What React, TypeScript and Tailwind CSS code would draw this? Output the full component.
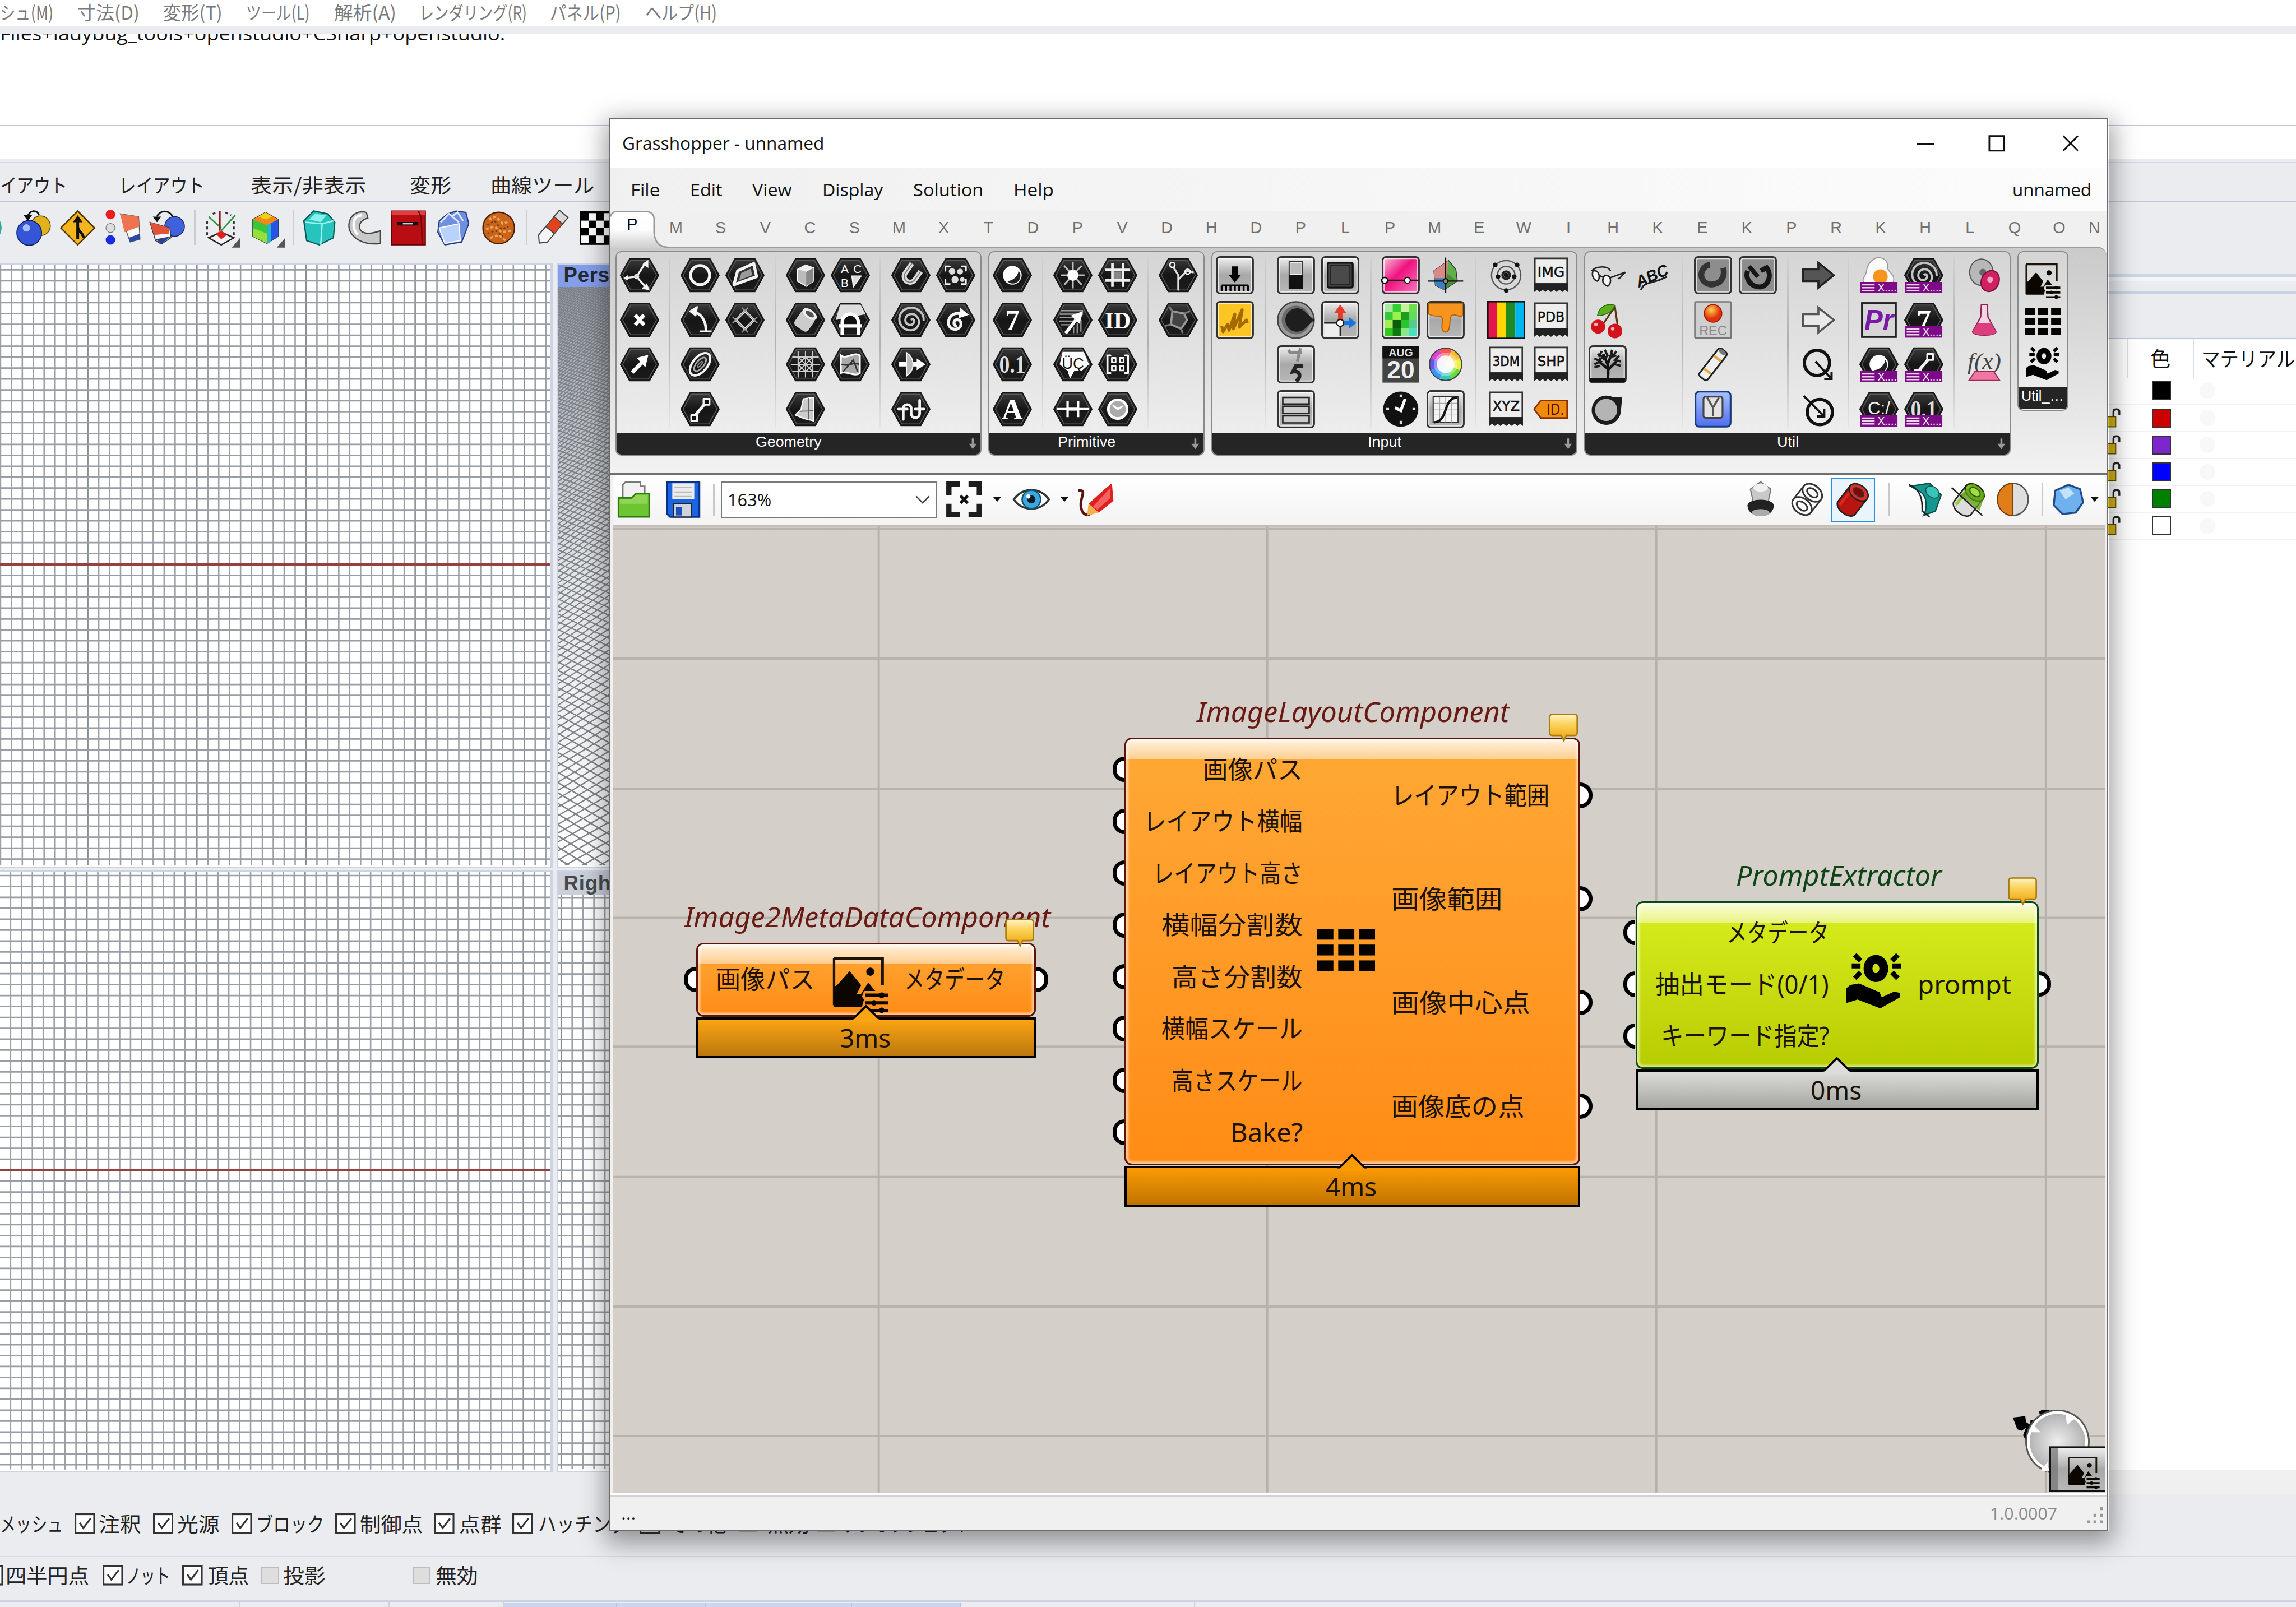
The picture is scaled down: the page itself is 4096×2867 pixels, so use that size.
import React, { useLayoutEffect, useRef } from "react";

type Kids = { children?: React.ReactNode };

/* Text squeezed or stretched to the width its class gives it. */
function Fit({ className, children }: Kids & { className: string }) {
  const outer = useRef<HTMLSpanElement>(null);
  const inner = useRef<HTMLSpanElement>(null);
  useLayoutEffect(() => {
    const o = outer.current!.getBoundingClientRect().width;
    const i = inner.current!.getBoundingClientRect().width;
    if (i > 0) inner.current!.style.transform = `scaleX(${o / i})`;
  }, []);
  return (
    <span ref={outer} className={"block shrink-0 " + className}>
      <span ref={inner} className="inline-block origin-left whitespace-nowrap">
        {children}
      </span>
    </span>
  );
}

function Ico({ children, className = "size-[26px]" }: Kids & { className?: string }) {
  return (
    <svg viewBox="-13 -13 26 26" className={"shrink-0 overflow-visible " + className} fill="none">
      {children}
    </svg>
  );
}

function Hex({ children }: Kids) {
  return (
    <Ico>
      <path d="M-13 0L-6.8 -11.2H6.8L13 0L6.8 11.2H-6.8Z" fill="url(#hex)" stroke="#161616" strokeWidth="0.8" strokeLinejoin="round" />
      <path d="M-11.6 0L-6 -10.1H6L11.6 0L6 10.1H-6Z" stroke="#5a5a5a" strokeWidth="0.6" />
      {children}
    </Ico>
  );
}

const wh = { stroke: "#f4f4f4", strokeWidth: 1.5, strokeLinejoin: "round" as const, strokeLinecap: "round" as const };
const serif = "Liberation Serif, serif";
const sans = "Liberation Sans, sans-serif";
const SPIRAL = "M0 0c1 -1.4 2.6 .4 1.4 1.8c-1.6 2 -4.6 .4 -4.4 -2c.2 -3.2 4.4 -4.2 6.4 -1.6c2.4 3.2 .2 7.4 -3.4 7.4c-4.6 0 -7.2 -4 -6 -8c1.2 -4 6.4 -5.6 10 -3.2c2 1.4 3.2 3.6 3 6";

const I: Record<string, React.ReactNode> = {
  point: <Hex><g {...wh} strokeWidth="1.3"><path d="M-2 1L4 -8.5M-2 1L-10 2M-2 1L4.5 8.500" /></g><path d="M6 -10.500L6 -5L2 -7.500ZM7 10.500L1.500 9L5 5.500ZM-11 2L-8 0V3.600Z" fill="#f4f4f4" /><circle cx="-2" cy="1" r="1.800" fill="#ddd" /></Hex>,
  cross: <Hex><path d="M-3 -3.4L3 3.4M3 -3.4L-3 3.4" stroke="#fff" strokeWidth="2.6" /></Hex>,
  vector: <Hex><path d="M-5 5.5L2 -1.6" stroke="#fff" strokeWidth="2.6" /><path d="M6 -6.5L4 2L-2 -4.4Z" fill="#fff" /></Hex>,
  circle: <Hex><circle r="6.500" {...wh} strokeWidth="2" /></Hex>,
  arc: <Hex><path d="M-5 -5.500C1 -5 4 1 4 7" {...wh} strokeWidth="1.800" /><path d="M-7 -6L-2 -9L-3 -3ZM0 7.600H7.500" {...wh} fill="#fff" strokeWidth="1" /></Hex>,
  curve: <Hex><g transform="rotate(-50)"><ellipse rx="9" ry="5" {...wh} strokeWidth="1.6" /><ellipse rx="5.6" ry="2.6" {...wh} stroke="#aaa" strokeWidth="1.1" /><ellipse rx="2.4" ry=".8" {...wh} stroke="#888" strokeWidth=".8" /></g></Hex>,
  line: <Hex><path d="M-4 5L4 -4.5" {...wh} strokeWidth="2" /><path d="M-6 4h4v4h-4ZM2.4 -7h4v4h-4Z" fill="#111" {...wh} strokeWidth="1.3" /></Hex>,
  plane: <Hex><path d="M-7.500 6.500L-5 -3L6 -8L8 1Z" {...wh} strokeWidth="2" fill="#333" /><path d="M-4 3.500L-2.500 -1.500L4 -4.500L5 0Z" fill="#999" /></Hex>,
  rect: <Hex><g transform="rotate(45)"><rect x="-4.4" y="-4.4" width="8.8" height="8.8" {...wh} strokeWidth="1.6" /><path d="M-7.5 -4.4H7.5M-7.5 4.4H7.5M-4.4 -7.5V7.5M4.4 -7.5V7.5" stroke="#999" strokeWidth=".9" /></g></Hex>,
  box: <Hex><path d="M-5.5 -4L0 -7L5.5 -5V4L.5 7.5L-5.5 4Z" fill="#bbb" stroke="#fff" strokeWidth=".7" /><path d="M.5 -2.4L5.5 -5V4L.5 7.5Z" fill="#888" /><path d="M-5.5 -4L.5 -2.4L5.5 -5L0 -7Z" fill="#eee" /></Hex>,
  brep: <Hex><g transform="rotate(35)"><rect x="-5.6" y="-5" width="11.2" height="12" rx="2.4" fill="#ccc" /><ellipse cy="-5" rx="5.6" ry="3" fill="#eee" /><ellipse cy="-5" rx="3.4" ry="1.6" fill="#555" /></g></Hex>,
  mesh: <Hex><g stroke="#ccc" strokeWidth=".8"><path d="M-5 -9V9M0 -9V9M5 -9V9M-9 -5H9M-10 0H10M-9 5H9M-5 -5L5 5M5 -5L-5 5M0 -5L-5 0L0 5L5 0Z" /></g></Hex>,
  twist: <Hex><path d="M-7 4L-3 0L-1.500 -7L5.500 -8V8L-1 6.400Z" fill="#ccc" stroke="#fff" strokeWidth=".8" /><path d="M2 -7.6V7M-4 1.500L5.5 1" stroke="#666" strokeWidth=".7" /></Hex>,
  abc: <Hex><g fill="#fff" fontFamily={sans} fontSize="8"><text x="-6.5" y="-1.500">A</text><text x="2" y="-1.500">C</text><text x="-6.5" y="8">B</text></g><path d="M1 0.500H7.500L2 8Z" fill="#ddd" stroke="#fff" strokeWidth=".6" /></Hex>,
  field: <Hex><path d="M-7 -10.500H7L10.500 -4L-10 0Z" fill="#ddd" /><path d="M-5.500 10V2C-6 -6 5.500 -6 5.500 2V10M-8 4H8" stroke="#fff" strokeWidth="2.400" /><path d="M-4.200 2C-4.500 -4.500 4.500 -4.500 4.200 2Z" fill="#111" /></Hex>,
  srf: <Hex><path d="M-6.5 -6C-3 -3 3 -9 6.5 -6V6C3 9 -3 4 -6.5 6Z" fill="#aaa" stroke="#fff" strokeWidth="1.200" /><path d="M-5 5L2 -3L5 5M-6 0C-2 2 2 -2 6 0" stroke="#333" strokeWidth="1" /></Hex>,
  magnet: <Hex><g transform="rotate(35)"><path d="M-4 -7V1A4 4 0 0 0 4 1V-6" stroke="#ddd" strokeWidth="3.400" /><path d="M-4 -7V1A4 4 0 0 0 4 1V-6" stroke="#777" strokeWidth=".7" /></g></Hex>,
  dots: <Hex><g fill="#ddd"><circle cx="-2.500" cy="-2.600" r="2.200" /><circle cx="3" cy="-2.500" r="2" /><circle cx="-.5" cy="3" r="2.400" /><circle cx="4.500" cy="3" r="1.600" /></g><path d="M-7 -3V-6h3M7 -3V-6H4M-7 3V6h3M7 3V6H4" {...wh} strokeWidth="1.1" /></Hex>,
  spiral: <Hex><path d={SPIRAL} stroke="#c4c4c4" strokeWidth="1.2" transform="scale(1.25)" /></Hex>,
  swirl: <Hex><path d="M0 4c-2 -1 -1.4 -4.4 1.2 -4.2c3 .2 3.4 5 0 6.2c-4 1.2 -7 -2 -6 -5.6c1 -4 4.6 -6 9.4 -4.4" {...wh} strokeWidth="2" /><path d="M3 -8.500L9 -3.500L2 -1.200Z" fill="#fff" /></Hex>,
  through: <Hex><path d="M-8 0H5" stroke="#fff" strokeWidth="3" /><path d="M4 -4L10 0L4 4Z" fill="#fff" /><path d="M-3 -8C3 -4 3 4 -3 8Z" fill="#bbb" stroke="#fff" strokeWidth=".7" /></Hex>,
  wave: <Hex><path d="M-5.200 7V-1A2.800 2.800 0 0 1 .2 -1V3A2.800 2.800 0 0 0 6 3V-6M-8.500 0H-2.500M3 0H9" {...wh} strokeWidth="1.800" /></Hex>,
  bool: <Hex><circle r="6.400" fill="#fff" /><path d="M4.200 -3A5 5 0 0 1 -3.500 4C0 4 4 1 4.200 -3Z" fill="#222" /></Hex>,
  seven: <Hex><text y="6.800" textAnchor="middle" fontFamily={serif} fontWeight="bold" fontSize="20" fill="#fff">7</text></Hex>,
  num: <Hex><text y="5.800" textAnchor="middle" fontFamily={serif} fontWeight="bold" fontSize="17" textLength="18" lengthAdjust="spacingAndGlyphs" fill="#ddd">0.1</text></Hex>,
  text: <Hex><text y="6.8" textAnchor="middle" fontFamily={serif} fontWeight="bold" fontSize="20" fill="#fff">A</text></Hex>,
  star: <Hex><path d="M0 -9V9M-8 0H8M-6 -6.5L6 6.5M6 -6.5L-6 6.5" stroke="#bbb" strokeWidth="1.2" /><circle r="3.800" fill="#fff" /></Hex>,
  hatch: <Hex><g stroke="#999" strokeWidth=".9"><path d="M-9 -4H7M-9 -1.6H5M-9.5 .8H2M-8 3.2H0M-8 -6.4H7M3 9V2M5.5 8V0M.5 9V5" /></g><path d="M-5 9L2 0" stroke="#fff" strokeWidth="2.200" /><path d="M7 -6L4.6 2.6L-1.4 -3Z" fill="#fff" /></Hex>,
  culture: <Hex><path d="M-7 -8.500H7.500L11 0L6 4.500L1 4.500L-2 10L-3.500 4.500L-9 0Z" fill="#fff" /><text y="3" textAnchor="middle" fontFamily={sans} fontSize="10.500" fill="#111">ÜÇ</text></Hex>,
  domain: <Hex><path d="M-11 0H11M-3.6 -5.5V5.5M3.6 -5.5V5.5" stroke="#fff" strokeWidth="1.6" /><path d="M-3.6 -1h7.2v2h-7.2Z" fill="#fff" /></Hex>,
  hash: <Hex><path d="M-3.6 -8V8M3.6 -8V8M-8.5 -3.6H8.5M-8.5 3.6H8.5" stroke="#eee" strokeWidth="1.8" /><path d="M-2.6 -2.6h5.2v5.2h-5.2Z" fill="#888" /></Hex>,
  id: <Hex><text y="5.6" textAnchor="middle" fontFamily={serif} fontWeight="bold" fontSize="16" fill="#fff">ID</text></Hex>,
  matrix: <Hex><path d="M-5 -6H-7V6H-5M5 -6H7V6H5" {...wh} strokeWidth="1.4" /><path d="M-4 -4.4h2.6v3h-2.6ZM1.4 -4.4H4v3H1.4ZM-4 1.2h2.6v3h-2.6ZM1.4 1.2H4v3H1.4Z" {...wh} strokeWidth="1.1" /></Hex>,
  time: <Hex><circle r="6.400" fill="#aaa" stroke="#fff" strokeWidth="1.8" /><path d="M-3.4 -2.6L0 0L3.4 -2" stroke="#fff" strokeWidth="1.3" /></Hex>,
  path: <Hex><path d="M0 10V0L-3 -5M0 3L6 -3M6 -3L10 -2" {...wh} stroke="#ddd" strokeWidth="1.3" /><circle cx="-4" cy="-7" r="1.7" {...wh} strokeWidth="1" /><circle cx="6.4" cy="-2.400" r="1.7" {...wh} strokeWidth="1" /></Hex>,
  poly: <Hex><path d="M-4 -6L4 -4.4L6 0L2 6L-5 3Z" fill="#444" stroke="#999" strokeWidth="1.4" /><path d="M-4 -6L-6 -9M4 -4.4L8 -6M2 6L3 9M-5 3L-9 4" stroke="#777" strokeWidth="1.3" /></Hex>,
};

function Tile({ children, fill = "url(#tile)" }: Kids & { fill?: string }) {
  return (
    <Ico>
      <rect x="-12.4" y="-12.4" width="24.8" height="24.8" rx="2.2" fill={fill} stroke="#333" strokeWidth="1.2" />
      <rect x="-11.4" y="-11.4" width="22.8" height="22.8" rx="1.4" stroke="#fff" strokeOpacity=".7" strokeWidth=".8" />
      {children}
    </Ico>
  );
}

function FileTag({ label }: { label: string }) {
  return (
    <Ico>
      <path d="M-11 -11.5H11V6H-11Z" fill="#eee" stroke="#333" strokeWidth="1" />
      <path d="M-11.5 5.5H11.5V11.5L9.6 10L7.7 11.5L5.8 10L3.9 11.5L2 10L0 11.5L-2 10L-3.9 11.5L-5.8 10L-7.7 11.5L-9.6 10L-11.5 11.5Z" fill="#222" />
      <text y="1" textAnchor="middle" fontFamily="DejaVu Sans, sans-serif" fontSize="9.8" textLength="18.500" lengthAdjust="spacingAndGlyphs" fill="#111" stroke="#111" strokeWidth=".25">{label}</text>
    </Ico>
  );
}

/* Purple banner that marks the wrapped components. */
function X({ children }: Kids) {
  return (
    <span className="relative flex size-[26px]">
      {children}
      <svg viewBox="0 0 26 8" className="absolute bottom-[0.8px] left-0 h-[7.8px] w-[26px]">
        <rect width="26" height="8" fill="#7d0a86" />
        <path d="M1 2H10M1 4H10M1 6H10" stroke="#e9d5ea" strokeWidth="1" />
        <text x="12" y="6.8" fontFamily={sans} fontSize="7.6" fill="#fff">X....</text>
      </svg>
    </span>
  );
}

function PictureGlyph({ className }: { className: string }) {
  return (
    <svg viewBox="0 0 39 36" className={className} fill="#0b0700">
      <path d="M1 1H35V20" fill="none" stroke="#1d1408" strokeWidth="2" />
      <path d="M1 1V34" stroke="#1d1408" strokeWidth="1.7" />
      <circle cx="26.5" cy="10.5" r="2.9" />
      <path d="M1 21L3 20L12 10L20 20L17 26L20 26L25 18L30 24H22L20.6 28L22 30L20.6 35H1Z" />
      <path d="M23 26.6H39V29H23ZM23 32H39V34.4H23ZM23 37.4H39V39.6H23Z" transform="translate(0 -.8)" />
      <circle cx="34.5" cy="27" r="2" /><circle cx="29" cy="32.4" r="2" /><circle cx="34.5" cy="37.6" r="2" />
    </svg>
  );
}

function GridGlyph({ className }: { className: string }) {
  return (
    <svg viewBox="0 0 39.6 29" preserveAspectRatio="none" className={className}>
      {[0, 10.8, 21.6].map((y) => [0, 14.3, 28.6].map((x) => <rect key={x + "-" + y} x={x} y={y} width="11" height="7.4" fill="#050300" />))}
    </svg>
  );
}

function HandGlyph({ className }: { className: string }) {
  return (
    <svg viewBox="0 0 38 38" preserveAspectRatio="none" className={className}>
      <ellipse cx="20.5" cy="10.3" rx="5.4" ry="6.2" fill="none" stroke="#000" strokeWidth="6" />
      <g stroke="#000" strokeWidth="3.4"><path d="M6 1L10 5M35.500 1L31.500 5M4 8.500H10M31.500 8.500H38M6 17L10 13M35.500 17L31.500 13" /></g>
      <path d="M0 24L3 21.500L9 20.500L23 26.500L24.500 30L33 26L37 27V30L23.500 37.500L8 31.500L0 34Z" fill="#000" />
    </svg>
  );
}

const clock = (
  <Ico><circle r="12" fill="#111" /><path d="M-4 -1L0 1L3 -7" stroke="#fff" strokeWidth="2" /><path d="M0 -10v2M0 8v2M-10 0h2M8 0h2" stroke="#ddd" strokeWidth="1.6" /></Ico>
);
const palette = ["#a9e8a0", "#2fd02f", "#c8ef9c", "#6be04f", "#35c935", "#9cef4c", "#1b9e1b", "#62d862", "#9ff050", "#0c5d0c", "#2cc42c", "#57c98a", "#35c522", "#0f7a0f", "#8ce68c", "#4be0c0"];

const P: Record<string, React.ReactNode> = {
  down: <Tile><path d="M0 -6V1" stroke="#000" strokeWidth="4" /><path d="M-4 0H4L0 5Z" fill="#000" /><path d="M-9 7H9M-9 7v4M-6 7v4M-3 7v4M0 7v4M3 7v4M6 7v4M9 7v4" stroke="#000" strokeWidth="1.3" /></Tile>,
  scribble: <Tile fill="#fcc524"><path d="M-9 4L-8 8L-5 3L-4 7L0 -4L-1 6L5 -7L3 5L8 0L8.500 2" stroke="#a36a00" strokeWidth="2" strokeLinejoin="round" /></Tile>,
  toggle: <Tile><rect x="-5" y="-9.5" width="10" height="19" fill="#111" /><rect x="-4" y="-8.600" width="8" height="8" fill="#bbb" stroke="#eee" strokeWidth=".6" /></Tile>,
  button: <Tile><rect x="-8.500" y="-8.500" width="17" height="17" rx="1" fill="#4a4a4a" stroke="#111" strokeWidth="1.3" /><rect x="-6.600" y="-6.600" width="13.200" height="13.200" stroke="#222" strokeWidth=".8" /></Tile>,
  knob: <Ico><circle r="12.400" fill="#9a9a9a" stroke="#444" strokeWidth="1" /><circle r="9.800" fill="#6c6c6c" /><path d="M12.400 0L7 -5A8 8 0 1 0 7 5Z" fill="#1e1e1e" /></Ico>,
  mdslider: <Tile><path d="M-11 2H0V11H-11Z" fill="#eee" /><path d="M-11 2H0V11" stroke="#222" strokeWidth="1" /><path d="M0 0V-6" stroke="#e43b2c" strokeWidth="3" /><path d="M-4 -5H4L0 -10.500Z" fill="#e43b2c" /><path d="M0 2H7" stroke="#1674e0" strokeWidth="3" /><path d="M6 -2V6L11 2Z" fill="#1674e0" /><circle cy="2" r="2.400" fill="#fff" stroke="#111" strokeWidth=".8" /></Tile>,
  scroll: <Tile><path d="M-5 -10L-4 -8H4M3 -11L1 -2" stroke="#888" strokeWidth="2" /><path d="M5 1H0L-2 5C3 4 4 9 0 11.500" stroke="#222" strokeWidth="2.600" /></Tile>,
  list: <Tile><path d="M-9 -8H9V-3.500H-9ZM-9 -2H9V3H-9ZM-9 4.600H9V9.400H-9Z" fill="#ccc" stroke="#222" strokeWidth="1" /></Tile>,
  gradient: <Tile fill="url(#pink)"><path d="M-12 3.500H12" stroke="#111" strokeWidth="1" /><circle cx="-11" cy="3.500" r="2" fill="#fff" stroke="#111" /><circle cx="4.500" cy="3.500" r="2" fill="#fff" stroke="#111" strokeWidth=".8" /></Tile>,
  samples: <Tile>{palette.map((c, i) => <rect key={i} x={-11 + (i % 4) * 5.5} y={-11 + Math.floor(i / 4) * 5.5} width="5.600" height="5.600" fill={c} />)}</Tile>,
  aug: <Ico><rect x="-12.500" y="-12.500" width="25" height="25" fill="#444" /><rect x="-12.500" y="-12.500" width="25" height="8.500" fill="#111" /><text y="-5.500" textAnchor="middle" fontFamily={sans} fontSize="7.500" fontWeight="bold" fill="#ddd">AUG</text><text y="9.500" textAnchor="middle" fontFamily={sans} fontSize="17" fontWeight="bold" fill="#eee">20</text></Ico>,
  clock,
  cube: <Ico><path d="M-8 -3L2 -10L7 -4L8 4L-1 10L-7 7Z" fill="#5fae4a" stroke="#333" strokeWidth=".6" /><path d="M-8 -3L2 -10L1 -1L-1 10L-7 7Z" fill="#d98a84" /><path d="M-7 7L-1 10L0 2L-7.500 2Z" fill="#3b7fc0" /><path d="M1 -1L8 4L-1 10Z" fill="#4a8a3a" /><path d="M-12 4H12M0 -12V12" stroke="#111" strokeWidth=".9" /><circle cy="4" r="1.600" fill="#888" stroke="#111" strokeWidth=".7" /></Ico>,
  drip: <Tile><path d="M-11.500 -11.500H11.500V-3C9 -1 7 -5 4 -3C2 -1 4 6 1 8C-3 9 -3 5 -2 0C-3 -5 -6 -1 -11.500 -4Z" fill="#f7941d" stroke="#b85f00" strokeWidth=".7" /></Tile>,
  wheel: <Ico>{["#f55", "#fb3", "#ee4", "#6d3", "#3cb", "#39f", "#65e", "#d4c"].map((c, i) => <path key={i} d="M0 0L-4.300 -10.400A11.300 11.300 0 0 1 4.300 -10.400Z" transform={`rotate(${i * 45})`} fill={c} />)}<circle r="11" stroke="#444" strokeWidth=".8" /><circle r="8" fill="#fff" opacity=".35" /><circle r="6" fill="#fff" opacity=".9" /></Ico>,
  graph: <Tile><path d="M-8.500 -8.500H8.500V9H-8.500Z" fill="#f4f4f4" stroke="#333" strokeWidth=".8" /><path d="M-4 -8V9M0 -8V9M4 -8V9M-8 -4H8M-8 0H8M-8 4H8" stroke="#aaa" strokeWidth=".5" /><path d="M-8 9C2 9 -2 -8 8 -8" stroke="#111" strokeWidth="1.600" /></Tile>,
  atom: <Ico><circle r="10" stroke="#555" strokeWidth=".9" /><circle r="6" stroke="#555" strokeWidth=".9" /><circle r="2.500" stroke="#222" strokeWidth="1.600" />{[[-7.5, -7], [7.5, -7], [-5.5, 1], [5.5, 1], [0, 10.5], [0, 0]].map(([x, y]) => <circle key={x + "," + y} cx={x} cy={y} r="1.600" fill="#111" />)}</Ico>,
  bars: <Ico><rect x="-12.500" y="-12.500" width="6.250" height="25" fill="#e4154b" /><rect x="-6.250" y="-12.500" width="6.250" height="25" fill="#ffd500" /><rect y="-12.500" width="6.250" height="25" fill="#1f8a26" /><rect x="6.250" y="-12.500" width="6.250" height="25" fill="#00b6f1" /><rect x="-12.500" y="-12.500" width="25" height="25" stroke="#111" strokeWidth="1" /></Ico>,
  idtag: <Ico><path d="M-11.500 0L-7 -6H11V6H-7Z" fill="#f08a0c" stroke="#8a2f00" strokeWidth="1" /><text x="3" y="4" textAnchor="middle" fontFamily="DejaVu Sans, sans-serif" fontSize="10" textLength="12" lengthAdjust="spacingAndGlyphs" fill="#4a1500">ID.</text></Ico>,
  glasses: <Ico><g stroke="#222" strokeWidth="1"><path d="M-11 -3C-8 -6 0 -7 2 -3M1 2L12 -2C9 1 8 3 7 2" /><path d="M-10 -3C-5 -4 -5 3 -7 4C-10 3 -11 0 -10 -3ZM-2 0C4 0 2 7 0 7.500C-4 6 -4 3 -2 0ZM-6 0L-3 1.500" fill="#f6f6f6" /></g></Ico>,
  abcpen: <Ico><text transform="rotate(-24)" x="-12" y="4" fontFamily={sans} fontWeight="bold" fontStyle="italic" fontSize="11" textLength="23" lengthAdjust="spacingAndGlyphs" fill="#111">ABC</text><path d="M-7 8C-3 4 0 6 10 1M-6 7L-8 10" stroke="#222" strokeWidth="1.200" /></Ico>,
  cherry: <Ico><path d="M-4 4L5 -9L7 5" stroke="#5b3410" strokeWidth="1.200" /><path d="M5 -10C0 -12 -6 -9 -7 -3C-2 -3 3 -5 5 -10Z" fill="#5fae1d" stroke="#2f6a0c" strokeWidth=".6" /><circle cx="-6.500" cy="4.500" r="4.800" fill="#d3121c" /><circle cx="5" cy="7.500" r="5" fill="#d3121c" /><circle cx="-8" cy="3" r="1.200" fill="#fbb" /><circle cx="3.500" cy="6" r="1.200" fill="#fbb" /></Ico>,
  tree: <Tile><path d="M0 10C1 5 0 2 0 0M0 4L6 -2M0 3L-6 -2M0 0L3 -8M0 0L-3 -7" stroke="#111" strokeWidth="1.800" /><path d="M-9 -4L-5 -2L-9 0M-7 -7L-3 -5L-6 -3M-2 -10L0 -6L-3 -3M3 -10L2 -5L6 -6M8 -6L5 -3L9 -2M9 1L5 0M-9 2L-5 1M-4 -9L-6 -5M6 -9L4 -6" stroke="#1c1c1c" strokeWidth="1.500" /><path d="M-12 9.500H12V12H-12Z" fill="#111" /></Tile>,
  ring: <Ico><path d="M10 -8.500L9 2A10 10 0 1 1 3 -8.500C5 -7.500 8 -8.500 10 -8.500Z" fill="#1c1c1c" /><circle cx="-1" cy=".5" r="7.600" fill="#b4b4b4" /></Ico>,
  refresh: <Tile fill="#8d8d8d"><path d="M7 -5C10 8 -7 10 -8 0C-8 -4 -5 -7 -2 -7" stroke="#333" strokeWidth="4" /></Tile>,
  timer: <Tile fill="#8d8d8d"><path d="M-7 -3C-9 3 -4 8 1 8C7 8 10 0 6 -5L2 -3" stroke="#161616" strokeWidth="3.400" /><path d="M-6 -6L0 1" stroke="#161616" strokeWidth="3" /></Tile>,
  rec: <Ico><rect x="-12.400" y="-12.400" width="24.800" height="24.800" rx="1" fill="#cfcfcf" stroke="#777" strokeWidth="1" /><circle cy="-4.500" r="6" fill="url(#ball)" stroke="#a01a00" strokeWidth=".7" /><text y="10.500" textAnchor="middle" fontFamily={sans} fontSize="9" fill="#888">REC</text></Ico>,
  tube: <Ico><g transform="rotate(38)"><rect x="-3.600" y="-12" width="7.200" height="24" rx="2" fill="#f0f0f0" stroke="#222" strokeWidth="1.200" /><path d="M-3 -5H3M-3 6H3" stroke="#e2ac4a" strokeWidth="1.800" /><ellipse cy="-10.500" rx="3" ry="1.500" fill="#777" /></g></Ico>,
  zip: <Ico><rect x="-12" y="-12" width="24" height="24" rx="2.600" fill="url(#blue)" stroke="#173c78" strokeWidth="1.200" /><rect x="-6.500" y="-8.500" width="13" height="14.500" rx="1.500" fill="#e3e3e3" stroke="#444" strokeWidth="1.200" /><path d="M-4 -8L0 -1L4 -8M0 -1V5" stroke="#555" strokeWidth="1.400" /></Ico>,
  fatDark: <Ico><path d="M-10.500 -4H0V-8.500L10.500 0L0 8.500V4H-10.500Z" fill="#555" stroke="#222" strokeWidth="1.400" /></Ico>,
  fatLight: <Ico><path d="M-10.500 -4H0V-8.500L10.500 0L0 8.500V4H-10.500Z" fill="#e9e9e9" stroke="#555" strokeWidth="1.400" /></Ico>,
  qOut: <Ico><circle cx="-1" cy="-1" r="8.600" stroke="#111" strokeWidth="2.200" /><path d="M-2 -2L9 10M9 5V10H4" stroke="#111" strokeWidth="1.500" /></Ico>,
  qIn: <Ico><circle cx="1" cy="2" r="8.600" stroke="#111" strokeWidth="2.200" /><path d="M-10 -9L4 5M4 0V5H-1" stroke="#111" strokeWidth="1.500" /></Ico>,
  egg: <X><Ico><path d="M-1 -12C5 -12 6 -9 6 -5C6 -2 11 -1 10 4C9 8 4 8 0 8C-8 9 -13 5 -10 1C-8 -2 -9 -2 -8 -5C-7 -8 -5 -11 -1 -12Z" fill="#fafafa" stroke="#999" strokeWidth=".7" /><circle cx="1" cy="1" r="5" fill="#f7941d" /></Ico></X>,
  pr: <Ico><rect x="-11.500" y="-11.500" width="23" height="23" fill="#d6d6d6" stroke="#222" strokeWidth="1.400" /><text y="7" textAnchor="middle" fontFamily={sans} fontStyle="italic" fontWeight="bold" fontSize="20" textLength="20" lengthAdjust="spacingAndGlyphs" fill="#7a19a8">Pr</text></Ico>,
  xhalf: <X>{I.bool}</X>,
  xcd: <X><Hex><text y="3.500" textAnchor="middle" fontFamily={sans} fontSize="12" fill="#eee">C:/</text></Hex></X>,
  xspiral: <X>{I.spiral}</X>,
  x7: <X>{I.seven}</X>,
  xline: <X>{I.line}</X>,
  x01: <X>{I.num}</X>,
  discs: <Ico><ellipse cx="-2" cy="-2" rx="8" ry="9" fill="#b8b8b8" stroke="#555" strokeWidth=".8" /><circle cx="-1" cy="-2" r="2.400" fill="#666" /><ellipse cx="4" cy="4" rx="6" ry="7.400" fill="#cf2265" stroke="#7a0f38" strokeWidth=".8" transform="rotate(25 4 4)" /><circle cx="4" cy="3" r="2" fill="#f5a6c4" /></Ico>,
  flask: <Ico><path d="M-2 -10.500H2L2.500 -2L8 8C8 11 -8 11 -8 8L-2.500 -2Z" fill="#f2d7e2" stroke="#8d2450" strokeWidth=".9" /><path d="M-4.500 2H4.500L8 8C8 11 -8 11 -8 8Z" fill="#dd3f7e" /></Ico>,
  fx: <Ico><text y="3" textAnchor="middle" fontFamily={serif} fontStyle="italic" fontSize="15" textLength="23" lengthAdjust="spacingAndGlyphs" fill="#444">f(x)</text><path d="M-6.500 5H6.500L10.500 11H-10.500Z" fill="#f077a3" stroke="#9d2a57" strokeWidth=".8" /></Ico>,
  img: <FileTag label="IMG" />, pdb: <FileTag label="PDB" />, shp: <FileTag label="SHP" />, dm: <FileTag label="3DM" />, xyz: <FileTag label="XYZ" />,
};

function Columns({ groups, set }: { groups: string[][][]; set: Record<string, React.ReactNode> }) {
  return (
    <div className="flex h-[123.8px] pl-[0.35px] pt-[0.5px]">
      {groups.map((cols, g) => (
        <div key={g} className="flex">
          {g > 0 && <div className="flex w-[10.9px] justify-center py-[3px]"><div className="w-[1px] bg-linear-to-b from-[#d0d0d0] via-[#b0b0b0] to-[#e6e6e6]" /></div>}
          {cols.map((names, c) => (
            <div key={c} className="flex w-[30.5px] flex-col">
              {names.map((n, r) => <div key={r} className="flex h-[30.45px] items-center justify-center">{set[n]}</div>)}
            </div>
          ))}
        </div>
      ))}
    </div>
  );
}

function Panel({ label, className, labelClass, children }: Kids & { label: string; className: string; labelClass: string }) {
  return (
    <section className={"flex shrink-0 flex-col overflow-hidden rounded-[4px] border border-[#8b8b8b] bg-linear-to-b from-[#d5d5d5] to-[#f0f0f0] " + className}>
      {children}
      <div className="relative flex h-[15px] shrink-0 items-start justify-center bg-[#252525] pt-[0.5px] font-['Liberation_Sans',sans-serif] text-[10px] leading-[11px] text-white">
        <Fit className={labelClass}>{label}</Fit>
        {label !== "Util_…" && (
          <svg viewBox="0 0 8 10" className="absolute right-[1.5px] top-[3px] h-[9px] w-[8px]"><path d="M4 1V6" stroke="#999" strokeWidth="1.500" /><path d="M1 5H7L4 9Z" fill="#999" /></svg>
        )}
      </div>
    </section>
  );
}

const TABS = "MSVCSMXTDPVDHDPLPMEWIHKEKPRKHLQO".split("");

function Ribbon() {
  return (
    <div className="flex h-[154.5px] gap-[4.5px] rounded-tr-[7px] border-t border-[#9c9c9c] bg-linear-to-b from-[#cacaca] to-[#f2f2f2] pl-[3.400px] pt-[2.400px]">
      <Panel label="Geometry" className="h-[139.8px] w-[250px]" labelClass="w-[45px] -ml-[14px]">
        <Columns set={I} groups={[[["point", "cross", "vector"]], [["circle", "arc", "curve", "line"], ["plane", "rect"]], [["box", "brep", "mesh", "twist"], ["abc", "field", "srf"]], [["magnet", "spiral", "through", "wave"], ["dots", "swirl"]]]} />
      </Panel>
      <Panel label="Primitive" className="h-[139.8px] w-[147.700px]" labelClass="w-[39.500px] -ml-[13px]">
        <Columns set={I} groups={[[["bool", "seven", "num", "text"]], [["star", "hatch", "culture", "domain"], ["hash", "id", "matrix", "time"]], [["path", "poly"]]]} />
      </Panel>
      <Panel label="Input" className="h-[139.8px] w-[250px]" labelClass="w-[23px] -ml-[13px]">
        <Columns set={P} groups={[[["down", "scribble"]], [["toggle", "knob", "scroll", "list"], ["button", "mdslider"]], [["gradient", "samples", "aug", "clock"], ["cube", "drip", "wheel", "graph"]], [["atom", "bars", "dm", "xyz"], ["img", "pdb", "shp", "idtag"]]]} />
      </Panel>
      <Panel label="Util" className="h-[139.8px] w-[291.500px]" labelClass="w-[15px] -ml-[13px]">
        <Columns set={P} groups={[[["glasses", "cherry", "tree", "ring"], ["abcpen"]], [["refresh", "rec", "tube", "zip"], ["timer"]], [["fatDark", "fatLight", "qOut", "qIn"]], [["egg", "pr", "xhalf", "xcd"], ["xspiral", "x7", "xline", "x01"]], [["discs", "flask", "fx"]]]} />
      </Panel>
      <Panel label="Util_…" className="h-[109px] w-[34.800px]" labelClass="w-[29px]">
        <div className="flex h-[92px] flex-col items-center pt-[4px]">
          <div className="flex h-[28.800px] items-center"><PictureGlyph className="h-[22px] w-[24px] overflow-visible" /></div>
          <div className="flex h-[28.800px] items-center"><GridGlyph className="h-[18px] w-[25px]" /></div>
          <div className="flex h-[28.800px] items-center"><HandGlyph className="h-[23px] w-[23px]" /></div>
        </div>
      </Panel>
    </div>
  );
}

function Caret() {
  return <svg viewBox="0 0 6 4" className="h-[3.500px] w-[6px] shrink-0"><path d="M0 0H6L3 3.600Z" fill="#111" /></svg>;
}

function Cylinder({ body, rim, hole }: { body: string; rim: string; hole: string }) {
  return (
    <g transform="rotate(38) scale(1.22)">
      <path d="M-6 -5V6A6 3.500 0 0 0 6 6V-5Z" fill={body} stroke="#222" strokeWidth=".8" />
      <path d="M-4 -3V7" stroke={rim} strokeWidth="1.600" opacity=".8" />
      <ellipse cy="-5" rx="6" ry="4" fill={rim} stroke="#222" strokeWidth=".8" />
      <ellipse cy="-5" rx="3.400" ry="2" fill={hole} stroke="#333" strokeWidth=".6" />
    </g>
  );
}

function Toolbar() {
  return (
    <div className="ml-[1.400px] mr-[1.500px] flex h-[34px] shrink-0 items-center bg-linear-to-b from-white to-[#f3f3f3] font-['Open_Sans',sans-serif] text-[#111]">
      <Ico className="ml-[2px] size-[26px]">
        <path d="M-8 -10L-6 -12H4V-9H7V4H-8Z" fill="#f1f1f1" stroke="#777" strokeWidth="1" />
        <path d="M-11 12V-1H-2L1 -4H10V12Z" fill="#6cc531" stroke="#2f7a10" strokeWidth="1" /><path d="M-10 -0H-2L1 -3H9V3H-10Z" fill="#a8e070" opacity=".6" />
      </Ico>
      <Ico className="ml-[7px] size-[26px]">
        <path d="M-11 -12H11V12H-9L-11 10Z" fill="#1b66e0" stroke="#0a2f8a" strokeWidth="1.200" />
        <rect x="-7.500" y="-11" width="15" height="11" fill="#ececec" /><path d="M-6 -8H6M-6 -5H6M-6 -2H6" stroke="#bbb" strokeWidth=".8" />
        <rect x="-6.500" y="3" width="12" height="9" fill="#cfd3da" stroke="#223" strokeWidth=".8" /><rect x="-5" y="5" width="4" height="6" fill="#1b4fc0" />
      </Ico>
      <div className="ml-[7.500px] h-[22px] w-[1px] bg-[#c8c8c8]" />
      <div className="ml-[4.500px] flex h-[25px] w-[147.500px] items-center justify-between border border-[#7a7a7a] bg-white pl-[3.500px] pr-[4px] text-[12px] leading-none">
        <Fit className="w-[30px]">163%</Fit>
        <svg viewBox="0 0 10 6" className="h-[6px] w-[10px]"><path d="M.5 .5L5 5L9.500 .5" fill="none" stroke="#444" strokeWidth="1" /></svg>
      </div>
      <Ico className="ml-[5.500px] size-[26px]"><path d="M-10.400 -3V-10.400H-3M3 -10.400H10.400V-3M10.400 3V10.400H3M-3 10.400H-10.400V3" stroke="#1d1d1d" strokeWidth="3.600" /><path d="M-2.500 -2.500L2.500 2.500M2.500 -2.500L-2.500 2.500" stroke="#111" strokeWidth="2" /></Ico>
      <span className="ml-[6.500px] flex"><Caret /></span>
      <Ico className="ml-[7.500px] size-[26px]"><path d="M-12 0C-6 -8.500 6 -8.500 12 0C6 8.500 -6 8.500 -12 0Z" fill="#fff" stroke="#333" strokeWidth="1.400" /><circle r="6.300" fill="#3aa7e0" stroke="#14506e" strokeWidth="1" /><circle r="2.800" fill="#0b1c2c" /><circle cx="-2" cy="-2" r="1.400" fill="#fff" /></Ico>
      <span className="ml-[6.500px] flex"><Caret /></span>
      <Ico className="ml-[5.500px] size-[26px]"><path d="M-12 -6C-5 -7 -12 0 -10 6C-9 11 -5 12 -2 8" stroke="#5a1410" strokeWidth="1.800" /><path d="M11 -11L12 1L2 9L-5 3L6 -7Z" fill="#e01f1f" /><path d="M10 -8L10 -1L1 7L-2 5Z" fill="#ff8d8d" opacity=".6" /><path d="M-5 3L2 9L-6 11Z" fill="#f0b24a" /></Ico>
      <div className="flex-1" />
      <Ico className="size-[26px]"><path d="M-7 -7L0 -12L7 -7L5 2H-5Z" fill="#c9c9c9" stroke="#777" strokeWidth=".8" /><ellipse cy="-8" rx="5" ry="2.800" fill="#f1f1f1" /><path d="M-9 4C-8 -1 8 -1 9 4C9 9 4 11.500 0 11.500S-9 9 -9 4Z" fill="#222" /><ellipse cy="9" rx="6" ry="2.400" fill="#aaa" /></Ico>
      <Ico className="ml-[5.700px] size-[26px]"><g transform="rotate(38) scale(1.150)" stroke="#333" strokeWidth="1"><path d="M-6.500 -5V5M6.500 -5V5" /><ellipse cy="-5" rx="6.500" ry="4.500" fill="#fafafa" /><ellipse cy="-5" rx="3.600" ry="2.200" /><ellipse cy="5" rx="6.500" ry="4.500" fill="#fafafa" /><ellipse cy="5" rx="3.600" ry="2.200" /></g></Ico>
      <div className="ml-[3.600px] flex h-[30px] w-[30px] items-center justify-center border border-[#2b8fe0] bg-[#e9f4fd]"><Ico><Cylinder body="#b81410" rim="#d9302a" hole="#7a0805" /></Ico></div>
      <div className="ml-[9px] h-[23px] w-[1px] bg-[#c8c8c8]" />
      <Ico className="ml-[12px] size-[26px]"><path d="M-11 -9L2 -11L10 -3L6 8L-2 11C1 5 0 -2 -4 -5Z" fill="#15978d" stroke="#0c4f4a" strokeWidth=".9" /><ellipse cx="4" cy="-5" rx="5" ry="3.600" transform="rotate(38 4 -5)" fill="#39c4ba" stroke="#0c4f4a" strokeWidth=".6" /><path d="M-12 -10C-2 -6 -3 4 -3 8L2 12" stroke="#222" strokeWidth="1" fill="none" /></Ico>
      <Ico className="ml-[3px] size-[26px]"><Cylinder body="#dcdcdc" rim="#7fc41c" hole="#3d6e08" /><path d="M-6 -3L3 -11L11 -4L7 8Z" fill="#5fa016" opacity=".75" /><ellipse cx="4" cy="-5" rx="4" ry="2.500" transform="rotate(38 4 -5)" fill="#a4dc48" stroke="#2f5a05" strokeWidth=".7" /><path d="M-12 -8L9 11" stroke="#222" strokeWidth="1" /></Ico>
      <Ico className="ml-[4px] size-[26px]"><ellipse rx="10.500" ry="11" fill="#dedede" stroke="#555" strokeWidth="1" /><path d="M0 -11A10.500 11 0 0 0 0 11Z" fill="#e07e1c" stroke="#7a3c00" strokeWidth=".7" /></Ico>
      <div className="ml-[6.500px] h-[23px] w-[1px] bg-[#c8c8c8]" />
      <Ico className="ml-[4.500px] size-[26px]"><path d="M0 -10L8 -7L10 2L5 9L-4 10L-10 4L-9 -6Z" fill="#6fb1ee" stroke="#1f4c88" strokeWidth="1.300" strokeLinejoin="round" /><path d="M-6 -6L0 -8L4 -4L-2 0Z" fill="#c3e2fb" /></Ico>
      <span className="ml-[2px] mr-[4px] flex"><Caret /></span>
    </div>
  );
}

function Port({ side }: { side: "l" | "r" }) {
  return side === "l" ? (
    <div className="absolute right-full mr-[1.300px] h-[17.300px] w-[8px] rounded-l-full border-[3px] border-r-0 border-black bg-white" />
  ) : (
    <div className="absolute left-full ml-[1.300px] h-[17.300px] w-[8.200px] rounded-r-full border-[3px] border-l-0 border-black bg-white" />
  );
}

type Row = { t: string; w: string };
type NodeProps = {
  place: string; title: Row; titleTone: string; tag: string; body: string; glyphPlace: string;
  ins: Row[]; outs: Row[]; inRow: string; outRow: string; glyph: React.ReactNode; bar: string; notch: string; time: string; inW: string; outW: string;
};

function Node(p: NodeProps) {
  return (
    <div className={"absolute flex flex-col " + p.place}>
      <div className={"relative flex border-[1.500px] rounded-[5px] shadow-[inset_0_0_1.500px_1.500px_rgba(255,255,255,0.55)] " + p.body}>
        <div className="absolute inset-x-0 top-0 h-[13.500px] rounded-t-[3.500px] bg-linear-to-b from-white/85 to-white/45" />
        <div className={"relative flex flex-col " + p.inW}>
          {p.ins.map((r) => (
            <div key={r.t} className={"relative flex items-center justify-end " + p.inRow}>
              <Port side="l" />
              <Fit className={r.w}>{r.t}</Fit>
            </div>
          ))}
        </div>
        <div className={"relative flex " + p.glyphPlace}>{p.glyph}</div>
        <div className={"relative ml-auto flex flex-col " + p.outW}>
          {p.outs.map((r) => (
            <div key={r.t} className={"relative flex items-center " + p.outRow}>
              <Fit className={r.w}>{r.t}</Fit>
              <Port side="r" />
            </div>
          ))}
        </div>
      </div>
      <div className={"relative mt-[0.500px] flex h-[28px] items-center justify-center border-[1.800px] border-black " + p.bar}>
        <svg viewBox="0 0 20 12" className="absolute -top-[10.300px] left-1/2 h-[12px] w-[20px] -translate-x-1/2">
          <path d="M1 10L10 1.200L19 10V12H1Z" fill={p.notch} />
          <path d="M0 9.400H1.500L10 1.200L18.500 9.400H20" fill="none" stroke="#000" strokeWidth="1.500" />
        </svg>
        <Fit className="-ml-[1px] w-[35px]">{p.time}</Fit>
      </div>
      <div className={"absolute leading-[20px] italic " + p.titleTone}><Fit className={p.title.w}>{p.title.t}</Fit></div>
      <svg viewBox="0 0 20 19" className={"absolute -top-[16.500px] h-[19px] w-[20px] " + p.tag}>
        <path d="M2.500 .6H17.500Q19.400 .6 19.400 2.500V13Q19.400 15 17.500 15H12L10.300 18.500L8.500 15H2.500Q.6 15 .6 13V2.500Q.6 .6 2.500 .6Z" fill="url(#tag)" stroke="#a87a0c" strokeWidth="1" />
      </svg>
    </div>
  );
}

const COLS = [181.7, 447, 712.7, 978.8];
const ROWS = [3, 91.5, 180.5, 268.5, 356.5, 445.5, 534, 622.5];

function Canvas() {
  return (
    <div className="relative ml-[1.400px] mr-[1.500px] h-[661px] shrink-0 overflow-hidden bg-[#d4cfc8] font-['Noto_Sans','Noto_Sans_CJK_JP',sans-serif] text-[17.500px] leading-none text-[#1c1206]">
      <svg className="absolute inset-0 h-full w-full">
        {COLS.map((x) => <path key={x} d={`M${x} 0V661`} stroke="#b7b2a9" strokeWidth="1.500" />)}
        {ROWS.map((y) => <path key={y} d={`M0 ${y}H1020`} stroke="#b9b4ab" strokeWidth="1.500" />)}
      </svg>
      <div className="absolute inset-x-0 top-0 h-[3px] bg-linear-to-b from-[#bdb8b0] to-transparent" />
      <Node
        place="left-[56.900px] top-[285.700px] w-[232.200px]" title={{ t: "Image2MetaDataComponent", w: "w-[250px]" }}
        titleTone="-left-[8px] -top-[28px] text-[18.500px] text-[#6a1a14]" tag="right-[1.300px]"
        body="h-[50.500px] border-[#5e120c] bg-linear-to-b from-[#ffa835] to-[#ff8c14]" inW="w-[80px] pt-[2.800px]" outW="w-[89px] pt-[2.800px]"
        glyphPlace="ml-[11.500px] pt-[8.500px]" inRow="h-[42px]" outRow="h-[42px]"
        ins={[{ t: "画像パス", w: "w-[67.500px]" }]} outs={[{ t: "メタデータ", w: "w-[69px]" }]}
        glyph={<PictureGlyph className="h-[35px] w-[39px] overflow-visible" />}
        bar="bg-linear-to-b from-[#fba414] to-[#bc780e]" notch="#fba414" time="3ms"
      />
      <Node
        place="left-[349.500px] top-[145.700px] w-[311.100px]" title={{ t: "ImageLayoutComponent", w: "w-[213.500px]" }}
        titleTone="left-[49.500px] -top-[28px] text-[18.500px] text-[#6a1a14]" tag="right-[1.300px]"
        body="h-[292px] border-[#5e120c] bg-linear-to-b from-[#ffa835] to-[#ff8c14]" inW="w-[120.500px] pt-[2.700px]" outW="w-[127.700px] pt-[2.700px]"
        glyphPlace="ml-[9.900px] pt-[129.200px]" inRow="h-[35.400px]" outRow="h-[70.800px]"
        ins={[
          { t: "画像パス", w: "w-[68px]" }, { t: "レイアウト横幅", w: "w-[108.500px]" }, { t: "レイアウト高さ", w: "w-[102.500px]" }, { t: "横幅分割数", w: "w-[96.500px]" },
          { t: "高さ分割数", w: "w-[89.500px]" }, { t: "横幅スケール", w: "w-[96.500px]" }, { t: "高さスケール", w: "w-[89.500px]" }, { t: "Bake?", w: "w-[49.500px]" },
        ]}
        outs={[{ t: "レイアウト範囲", w: "w-[108px]" }, { t: "画像範囲", w: "w-[76px]" }, { t: "画像中心点", w: "w-[95px]" }, { t: "画像底の点", w: "w-[91px]" }]}
        glyph={<GridGlyph className="h-[29px] w-[39.600px]" />}
        bar="bg-linear-to-b from-[#fb9a05] to-[#bf7300]" notch="#fb9a05" time="4ms"
      />
      <Node
        place="left-[698.500px] top-[257.300px] w-[275.400px]" title={{ t: "PromptExtractor", w: "w-[140.500px]" }}
        titleTone="left-[68.500px] -top-[28px] text-[18.500px] text-[#0f4416]" tag="right-[1.300px]"
        body="h-[114.500px] border-[#0c4a14] bg-linear-to-b from-[#d9ee1c] to-[#b8cc02]" inW="w-[131px] pt-[2.500px]" outW="w-[81.500px] pt-[37.800px]"
        glyphPlace="ml-[11.500px] pt-[34.500px]" inRow="h-[35.350px]" outRow="h-[35.350px]"
        ins={[{ t: "メタデータ", w: "w-[70px]" }, { t: "抽出モード(0/1)", w: "w-[118.500px]" }, { t: "キーワード指定?", w: "w-[115px]" }]}
        outs={[{ t: "prompt", w: "w-[64px]" }]}
        glyph={<HandGlyph className="h-[38px] w-[38px]" />}
        bar="bg-linear-to-b from-[#dcdcd8] to-[#a5a6a1]" notch="#dcdcd8" time="0ms"
      />
      <svg viewBox="0 0 66 56" className="absolute bottom-0 right-0 h-[56px] w-[66px]">
        <path d="M3 5L11.500 4L12 8L15 10L15 7L20 6L23 9L16 18L12 21L10 17L12 12L9 14L6 13ZM21 1L24 -1L28 0L28 4L22 7Z" fill="#000" />
        <circle cx="33.500" cy="21.500" r="22" fill="#555" /><circle cx="33.500" cy="21.500" r="20.900" fill="#fff" /><circle cx="33.500" cy="21.500" r="19" fill="url(#dial)" />
        <path d="M39 3L45 6L40 10ZM17 10L22 15H15ZM22 41L27 35V42Z" fill="#fff" />
        <rect x="28.500" y="25.300" width="40" height="29.900" fill="url(#tile)" stroke="#111" strokeWidth="1.300" />
        <rect x="29.200" y="26" width="4.500" height="28.500" fill="#777" opacity=".75" />
      </svg>
      <PictureGlyph className="absolute bottom-[4.500px] right-[2.500px] h-[20px] w-[24px] overflow-visible" />
    </div>
  );
}

function Grasshopper() {
  return (
    <div className="absolute left-[416.300px] top-[80.700px] flex h-[965.100px] w-[1023.600px] flex-col overflow-hidden border border-[#6c6c6c] bg-[#f0f0f0] font-['Open_Sans',sans-serif] text-[12px] leading-none text-[#111]">
      <header className="flex h-[33.200px] shrink-0 items-center bg-white pl-[8px]">
        <Fit className="w-[138px]">Grasshopper - unnamed</Fit>
        <div className="flex-1" />
        <svg viewBox="0 0 112 12" className="mr-[19px] h-[12px] w-[112px]" fill="none" stroke="#111" strokeWidth="1.100">
          <path d="M1 6.500H13M50.500 1H60.500V11H50.500ZM101 1L111 11M111 1L101 11" />
        </svg>
      </header>
      <nav className="flex h-[29.300px] shrink-0 items-center bg-linear-to-r from-[#f0f0f0] to-[#fcfcfc] pl-[13.500px] pt-[0.500px]">
        <Fit className="w-[20px]">File</Fit>
        <Fit className="ml-[20.500px] w-[22px]">Edit</Fit>
        <Fit className="ml-[20.500px] w-[27px]">View</Fit>
        <Fit className="ml-[21px] w-[41.500px]">Display</Fit>
        <Fit className="ml-[20.500px] w-[48px]">Solution</Fit>
        <Fit className="ml-[20.500px] w-[27.500px]">Help</Fit>
        <div className="flex-1" />
        <Fit className="mr-[11px] w-[54px]">unnamed</Fit>
      </nav>
      <div className="relative flex h-[24.500px] shrink-0 font-['Liberation_Sans',sans-serif] text-[11px] text-[#707070]">
        <svg viewBox="0 0 40 25.500" className="absolute left-0 top-0 z-10 h-[25.500px] w-[40px]">
          <path d="M0 25.500V4Q1 .6 4 .6H24Q29.800 .6 29.800 6V15Q30.500 25 40 25V25.500Z" fill="url(#tab)" />
          <path d="M0 4Q1 .6 4 .6H24Q29.800 .6 29.800 6V15Q30.500 25 40 25" fill="none" stroke="#999" strokeWidth="1" />
        </svg>
        <span className="relative z-20 w-[30px] pt-[4px] text-center text-black">P</span>
        {TABS.map((t, i) => <span key={i} className="w-[30.470px] shrink-0 pt-[6px] text-center">{t}</span>)}
        <span className="w-[18px] pt-[6px] text-center">N</span>
      </div>
      <Ribbon />
      <div className="h-[1.300px] shrink-0 bg-[#707070]" />
      <Toolbar />
      <Canvas />
      <div className="h-[2px] shrink-0 bg-white" />
      <footer className="flex flex-1 items-center border-t border-[#d2d2d2] pl-[7px] pr-[2px] text-[11.500px]">
        <Fit className="w-[10px]">...</Fit>
        <div className="flex-1" />
        <Fit className="mr-[20px] w-[46px] text-[#8a8a8a]">1.0.0007</Fit>
        <svg viewBox="0 0 12 12" className="mt-[4px] h-[12px] w-[12px]" fill="#999"><path d="M9 0h2v2H9ZM4.500 4.500h2v2h-2ZM9 4.500h2v2H9ZM0 9h2v2H0ZM4.500 9h2v2h-2ZM9 9h2v2H9Z" /></svg>
      </footer>
    </div>
  );
}

/* Wireframe construction-plane grid of one viewport. */
function PlaneGrid({ w, h, x0, y0, axis = true, className }: { w: number; h: number; x0: number; y0: number; axis?: boolean; className: string }) {
  const s = 7.452;
  const xs: [number, boolean][] = [];
  const ys: [number, boolean][] = [];
  for (let i = Math.ceil(-x0 / s); x0 + i * s < w; i++) xs.push([x0 + i * s, i % 10 === 0]);
  for (let i = Math.ceil(-y0 / s); y0 + i * s < h; i++) ys.push([y0 + i * s, i % 10 === 0]);
  return (
    <svg viewBox={`0 0 ${w} ${h}`} className={className}>
      {xs.map(([x, m]) => <path key={"x" + x} d={`M${x} 0V${h}`} stroke={m ? "#898e93" : "#9ba1a8"} strokeWidth="1" />)}
      {ys.map(([y]) => <path key={"y" + y} d={`M0 ${y}H${w}`} stroke="#989ea5" strokeWidth="1.050" />)}
      {axis && <path d={`M0 ${y0}H${w}`} stroke="#96403f" strokeWidth="1.900" />}
    </svg>
  );
}

function PerspectiveGrid() {
  const lines: React.ReactNode[] = [];
  for (let y = -30, k = 0; y < 440; k++) {
    const t = Math.max(0, Math.min(1, (y + 10) / 400));
    const m = 0.25 + 0.38 * t;
    lines.push(<path key={"a" + k} d={`M0 ${y - 18 * m}L36 ${y + 18 * m}`} stroke="#7d838a" strokeWidth={0.7 + 0.3 * t} />);
    y += 1.6 + 6.2 * t;
  }
  for (let y = -30, k = 0; y < 440; k++) {
    const t = Math.max(0, Math.min(1, (y + 10) / 400));
    const m = -0.9 + 0.35 * t;
    lines.push(<path key={"b" + k} d={`M0 ${y - 18 * m}L36 ${y + 18 * m}`} stroke="#7d838a" strokeWidth={0.7 + 0.2 * t} />);
    y += 1.5 + 5 * t;
  }
  return <svg viewBox="0 0 36 395" className="h-[395px] w-[36px]"><rect width="36" height="395" fill="url(#persp)" />{lines}</svg>;
}

function Check({ off }: { off?: boolean }) {
  return off ? (
    <span className="block size-[12px] shrink-0 border border-[#bcbcbc] bg-[#dedede]" />
  ) : (
    <svg viewBox="0 0 14 14" className="size-[14px] shrink-0"><rect x=".6" y=".6" width="12.800" height="12.800" fill="#fff" stroke="#333" strokeWidth="1.200" /><path d="M3.500 6.500L6 10L11 3.500" fill="none" stroke="#333" strokeWidth="1.200" /></svg>
  );
}

function Sep() {
  return <div className="h-[24px] w-[1px] shrink-0 bg-[#c9ccd3]" />;
}

function RhinoIcons() {
  const c = "size-[25px] shrink-0";
  return (
    <div className="flex h-[35px] items-center">
      <div className="w-[4px] overflow-hidden"><Ico className="-ml-[21px] size-[24px]"><circle r="11" fill="#2fa89a" /></Ico></div>
      <Ico className={"ml-[6.500px] " + c}><circle cx="5" cy="-1.500" r="7" fill="#e2b21c" stroke="#5c4300" strokeWidth=".6" /><circle cx="-3" cy="3.500" r="8.800" fill="#3355d6" stroke="#121f66" strokeWidth=".7" /><circle cx="-5" cy="0" r="2.600" fill="#a8bcff" /><path d="M-4 -8C-3 -13 3 -13 4 -9" stroke="#111" strokeWidth="1.200" /><path d="M-7 -9H-1L-4 -5Z" fill="#111" /></Ico>
      <Ico className={"ml-[5px] " + c}><path d="M0 -12L12 0L0 12L-12 0Z" fill="#f7b51d" stroke="#4d3600" strokeWidth="1" /><path d="M0 8V-6M4 7C4 3 0 3 0 -1" stroke="#111" strokeWidth="2" /><path d="M-3.500 -4L0 -9L3.500 -4Z" fill="#111" /></Ico>
      <Ico className={"ml-[6px] " + c}><circle cx="-9" cy="-9.500" r="3.400" fill="#ee1c1c" /><circle cx="-9" cy="0" r="3.200" fill="#ddd" stroke="#777" strokeWidth=".5" /><circle cx="-9" cy="8.500" r="3.400" fill="#1b2be0" /><path d="M-2 -10L11 -8L12 8L5 10Z" fill="#f7f7f7" stroke="#555" strokeWidth=".6" /><path d="M-2 -10L11 -8L11.500 -1L1 3Z" fill="#ef7350" /><path d="M4 7L12 4V8L5 10Z" fill="#2c49a8" /></Ico>
      <Ico className={"ml-[5px] " + c}><circle cx="5.500" cy="-1" r="7" fill="#3f62dc" stroke="#15226a" strokeWidth=".6" /><path d="M-12 -4L2 0L3 7L-4 11.500L-8 9Z" fill="#f7f7f7" stroke="#333" strokeWidth=".6" /><path d="M-12 -4L2 0L1.500 4L-9 5Z" fill="#e25439" /><path d="M-8 8L3 6L-4 11.500Z" fill="#2c3f90" /><path d="M-7 -8C-5 -13 2 -13 4 -8" stroke="#111" strokeWidth="1.200" /><path d="M-10 -8H-4L-7 -4Z" fill="#111" /></Ico>
      <div className="w-[6px]" /><Sep />
      <Ico className={"ml-[5px] " + c}><path d="M0 0L-9 -8M0 2L10 -9M0 2V12" stroke="#2b9a3a" strokeWidth="1.100" /><path d="M-1 -12V2" stroke="#8a1a1a" strokeWidth="1.200" /><path d="M-9 7L0 3L9 7L0 12Z" stroke="#222" fill="#f3f3f3" strokeWidth="1" /><path d="M-4 4L0 2L4 5L0 8Z" fill="#e02020" /><path d="M-10 -5V7M9 -5V7M-6 -10L-3 -11M3 -11L7 -9" stroke="#333" strokeDasharray="2 2" strokeWidth="1.200" /><path d="M13.500 7V14H7.500Z" fill="#555" /></Ico>
      <Ico className={"ml-[5.500px] " + c}><path d="M-9 -6L0 -11L9 -6V6L1 11L-9 6Z" fill="#39c83c" stroke="#333" strokeWidth=".7" /><path d="M1 -2L9 -6V6L1 11Z" fill="#2554e8" /><path d="M-9 -6L0 -11L9 -6L1 -2Z" fill="#f7861d" /><path d="M-5 -8L0 -6L5 -8L0 -11Z" fill="#e8d31a" /><path d="M-9 0L1 4V11L-9 6Z" fill="#93e03a" /><path d="M1 -2L4 -3.500V9.500L1 11Z" fill="#22b5ce" /><path d="M14 7V14H8Z" fill="#555" /></Ico>
      <div className="w-[6px]" /><Sep />
      <Ico className={"ml-[4.500px] " + c}><path d="M-11 -5L-4 -12L6 -10L11 -4L10 7L0 12L-9 9Z" fill="#27c3bd" stroke="#085955" strokeWidth=".9" /><path d="M-10 -4L2 -3L10 -5M2 -3L1 12" stroke="#9ff5f0" strokeWidth="1" /><path d="M-7 -6L-3 -10L5 -9L1 -4Z" fill="#8af2ec" /></Ico>
      <Ico className={"ml-[5.500px] " + c}><path d="M2 -11C-10 -14 -14 0 -7 6C-2 11 6 12 12 11L12 2C4 5 -1 4 -2.500 1C-4 -3 -1 -6 3 -7Z" fill="#c9c9c9" stroke="#444" strokeWidth=".9" /><path d="M-1 -9C-8 -9 -9 0 -4 5" stroke="#fff" strokeWidth="1.800" /></Ico>
      <Ico className={"ml-[5.500px] " + c}><rect x="-12" y="-12" width="24" height="24" fill="#b80d12" stroke="#5c0306" strokeWidth=".8" /><path d="M-12 -12H12V-9H-12Z" fill="#e23c40" /><path d="M7 -12C10 -8 9 0 10 12" stroke="#6b0508" strokeWidth="1" /><path d="M-8 -3H7" stroke="#111" strokeWidth="2.400" /><path d="M-4 -3H3" stroke="#ccc" strokeWidth="1" /></Ico>
      <Ico className={"ml-[5.500px] " + c}><path d="M-4 -10L2 -12L9 -11L11 -3L6 10L-6 12L-11 3L-10 -5Z" fill="#6f8fe0" stroke="#24377c" strokeWidth=".8" /><path d="M-10 0L4 -3L5 9L-6 11Z" fill="#b9d2fb" stroke="#fff" strokeWidth=".8" /><path d="M-9 -4L-3 -10L4 -4M-1 -8L3 -11L7 -5" stroke="#dfe8ff" strokeWidth="1.200" /></Ico>
      <Ico className={"ml-[6px] " + c}><circle r="11.200" fill="#c8651a" stroke="#4c1f00" strokeWidth=".9" /><path d="M-7 -6L-2 -8L3 -3L8 -5M-9 1L-3 -1L2 3L9 2M-6 7L0 5L5 9" stroke="#f0a35a" strokeWidth="1.500" strokeDasharray="2 1.500" /><path d="M-8 -2L-3 -5L2 1L7 -1M-8 4L-2 2L3 6" stroke="#7d3708" strokeWidth="1" strokeDasharray="1.500 1.500" /></Ico>
      <div className="w-[6.500px]" /><Sep />
      <Ico className={"ml-[4px] " + c}><g transform="rotate(40)"><rect x="-4" y="-13" width="8" height="6" fill="#d9d9d9" stroke="#444" strokeWidth=".8" /><rect x="-4" y="-7" width="8" height="9" fill="#e2431e" stroke="#444" strokeWidth=".6" /><path d="M-4 2H4V10L0 14L-4 10Z" fill="#f4f4f4" stroke="#444" strokeWidth=".8" /></g></Ico>
      <Ico className={"ml-[5.500px] " + c}><rect x="-12" y="-12" width="24" height="24" fill="#000" />{[0, 1, 2, 3].map((r) => [0, 1].map((q) => <rect key={r + "" + q} x={-11 + (q * 2 + (r % 2 ? 0 : 1)) * 5.3} y={-10.500 + r * 5.3} width="5.300" height="5.300" fill="#fff" />))}</Ico>
    </div>
  );
}

const SWATCHES = ["bg-black", "bg-[#cc0000]", "bg-[#7d26cd]", "bg-[#0000ff]", "bg-[#008000]", "bg-white"];

function LayerPanel() {
  return (
    <div className="flex h-[840px] w-[130px] flex-col bg-white">
      <div className="h-[8.500px] border-b-2 border-[#ced5e3] bg-[#ebecf0]" />
      <div className="h-[2.500px] bg-[#f4f5f8]" />
      <div className="h-[9px] border-b-2 border-[#c9d1e2] bg-[#ebecf0]" />
      <div className="h-[31px] border-b border-[#bcc6da] bg-[#ebecf0]" />
      <div className="flex h-[26.500px] text-[14px] leading-none text-[#111]">
        <div className="w-[15px] border-r border-[#d9dfea]" />
        <div className="flex w-[45.500px] justify-center border-r border-[#d9dfea] pt-[6px]"><Fit className="w-[14px]">色</Fit></div>
        <div className="flex-1 pl-[5px] pt-[6px]"><Fit className="w-[64px]">マテリアル</Fit></div>
      </div>
      {SWATCHES.map((s, i) => (
        <div key={s} className="flex h-[18.430px] shrink-0 items-center border-b border-[#f0f2f7]">
          <svg viewBox="0 0 14 16" className="h-[16px] w-[14px] overflow-visible">
            {i > 0 && <><path d="M1 7H7V14H1Z" fill="#d8b51e" stroke="#5e4c00" strokeWidth=".8" /><path d="M5.500 7V3.500Q5.500 2 7.500 2T9.500 3.500V6" fill="none" stroke="#222" strokeWidth="1.300" /></>}
          </svg>
          <div className={"ml-[17.500px] size-[13px] border border-[#333] " + s} />
          <div className="ml-[19.500px] size-[11px] rounded-full bg-[#f8f8f8]" />
        </div>
      ))}
      <div className="flex-1" />
      <div className="h-[17px] shrink-0 bg-[#f0f0f0]" />
    </div>
  );
}

function Rhino() {
  return (
    <div className="flex h-full flex-col bg-[#ebecf0] font-['Noto_Sans_CJK_JP',sans-serif] leading-none text-[#222]">
      <div className="flex h-[17.500px] shrink-0 items-center overflow-hidden bg-white pb-[1px] text-[12.500px] text-[#7a7a7a]">
        <Fit className="w-[36.500px]">シュ(M)</Fit>
        <Fit className="ml-[16.500px] w-[42.500px]">寸法(D)</Fit>
        <Fit className="ml-[16px] w-[40.500px]">変形(T)</Fit>
        <Fit className="ml-[16px] w-[43.500px]">ツール(L)</Fit>
        <Fit className="ml-[16.500px] w-[42.500px]">解析(A)</Fit>
        <Fit className="ml-[16px] w-[73.500px]">レンダリング(R)</Fit>
        <Fit className="ml-[15.500px] w-[48.500px]">パネル(P)</Fit>
        <Fit className="ml-[16.500px] w-[49px]">ヘルプ(H)</Fit>
      </div>
      <div className="h-[5.500px] shrink-0 bg-[#ebecf0]" />
      <div className="h-[63px] shrink-0 overflow-hidden border-b border-[#bcc6da] bg-white font-['Open_Sans',sans-serif] text-[12.500px] text-[#111]">
        <Fit className="-mt-[7px] w-[345px] leading-[14px]">Files+ladybug_tools+openstudio+CSharp+openstudio.</Fit>
      </div>
      <div className="h-[22.300px] shrink-0 bg-white" />
      <div className="h-[3.200px] shrink-0 border-b border-[#d4dae6]" />
      <div className="flex h-[26.500px] shrink-0 items-center border-b border-[#c0c9db] pt-[3px] text-[13.500px]">
        <Fit className="w-[46px]">イアウト</Fit>
        <Fit className="ml-[35px] w-[58.500px]">レイアウト</Fit>
        <Fit className="ml-[31.500px] w-[79px]">表示/非表示</Fit>
        <Fit className="ml-[30px] w-[28.500px]">変形</Fit>
        <Fit className="ml-[26.500px] w-[71px]">曲線ツール</Fit>
      </div>
      <div className="flex h-[883px] shrink-0">
        <div className="flex w-[1440px] flex-col">
          <RhinoIcons />
          <div className="h-[6.500px]" />
          <div className="flex h-[413.500px] gap-[2px]">
            <div className="w-[378px] border-y-[1.500px] border-r-2 border-[#cbd3e4] bg-white"><PlaneGrid w={376} h={410.5} x0={209} y0={204.8} className="h-[410.500px] w-[376px]" /></div>
            <div className="w-[40px] border-y-[1.500px] border-l-[1.500px] border-[#cbd3e4] bg-white">
              <div className="h-[15.500px] bg-[#849eec] pl-[3.800px] pt-[1px] font-['Liberation_Sans',sans-serif] text-[14px] font-bold leading-[13px] tracking-[0.300px] text-[#222a33]">Pers</div>
              <PerspectiveGrid />
            </div>
          </div>
          <div className="h-[1.500px]" />
          <div className="flex h-[411px] gap-[2px]">
            <div className="w-[378px] border-y-[1.500px] border-r-2 border-[#cbd3e4] bg-white"><PlaneGrid w={376} h={408} x0={208.400} y0={203.500} className="h-[408px] w-[376px]" /></div>
            <div className="w-[60px] border-y-[1.500px] border-l-[1.500px] border-[#cbd3e4] bg-white">
              <div className="h-[15.500px] bg-[#cbcfd9] pl-[3.800px] pt-[1px] font-['Liberation_Sans',sans-serif] text-[14px] font-bold leading-[13px] tracking-[0.300px] text-[#444b50]">Righ</div>
              <PlaneGrid w={58} h={392} x0={2} y0={2} axis={false} className="h-[392px] w-[58px]" />
            </div>
          </div>
        </div>
        <div className="flex flex-col pt-[42.700px]"><LayerPanel /></div>
      </div>
      <div className="flex h-[42.500px] shrink-0 items-center border-b border-[#d5dbe6] pb-[2.500px] text-[14px]">
        <Fit className="w-[43px]">メッシュ</Fit>
        <span className="w-[8px]" /><Check /><Fit className="ml-[2.500px] w-[29px]">注釈</Fit>
        <span className="w-[8px]" /><Check /><Fit className="ml-[2.500px] w-[29px]">光源</Fit>
        <span className="w-[8px]" /><Check /><Fit className="ml-[3px] w-[46.500px]">ブロック</Fit>
        <span className="w-[7.500px]" /><Check /><Fit className="ml-[3px] w-[43px]">制御点</Fit>
        <span className="w-[7.500px]" /><Check /><Fit className="ml-[3px] w-[29px]">点群</Fit>
        <span className="w-[7.500px]" /><Check /><Fit className="ml-[3.500px] w-[62px]">ハッチング</Fit>
        <span className="w-[7.500px]" /><Check /><Fit className="ml-[6px] w-[39px]">その他</Fit>
        <span className="w-[9px]" /><Check off /><Fit className="ml-[7px] w-[29px]">無効</Fit>
        <span className="w-[5px]" /><Check off /><Fit className="ml-[4px] w-[90px]">サブオブジェクト</Fit>
      </div>
      <div className="flex h-[30.500px] shrink-0 items-center border-b-[1.500px] border-[#cdd3e0] pb-[4.500px] text-[14px]">
        <span className="-ml-[12px]"><Check /></span><Fit className="ml-[2px] w-[57px]">四半円点</Fit>
        <span className="w-[9px]" /><Check /><Fit className="ml-[2px] w-[30px]">ノット</Fit>
        <span className="w-[8.500px]" /><Check /><Fit className="ml-[3.500px] w-[28px]">頂点</Fit>
        <span className="w-[8.500px]" /><Check off /><Fit className="ml-[3px] w-[29px]">投影</Fit>
        <span className="w-[59.500px]" /><Check off /><Fit className="ml-[3.500px] w-[29px]">無効</Fit>
      </div>
      <div className="flex flex-1">
        <div className="w-[164px] border-r border-[#cbd1de]" />
        <div className="w-[102px] border-r border-[#cbd1de]" />
        <div className="w-[78px] border-r border-[#cbd1de]" />
        <div className="mt-[1px] w-[77.500px] border-r border-[#b9c4e0] bg-[#cdd6ee]" />
        <div className="mt-[1px] w-[60.500px] border-r border-[#b9c4e0] bg-[#cdd6ee]" />
        <div className="mt-[1px] w-[100px] border-r border-[#b9c4e0] bg-[#cdd6ee]" />
        <div className="mt-[1px] w-[74px] border-r border-[#b9c4e0] bg-[#cdd6ee]" />
        <div className="w-[160px] border-r border-[#cbd1de]" />
      </div>
    </div>
  );
}

function Gradients() {
  const v = { x1: 0, y1: 0, x2: 0, y2: 1 };
  return (
    <svg className="absolute size-0">
      <defs>
        <linearGradient id="hex" {...v}><stop offset="0" stopColor="#3a3a3a" /><stop offset=".5" stopColor="#161616" /><stop offset="1" stopColor="#1c1c1c" /></linearGradient>
        <linearGradient id="tile" {...v}><stop offset="0" stopColor="#f0f0f0" /><stop offset=".5" stopColor="#a8a8a8" /><stop offset="1" stopColor="#b8b8b8" /></linearGradient>
        <linearGradient id="pink" x1="0" y1="0" x2="1" y2="1"><stop offset="0" stopColor="#f9c6df" /><stop offset=".45" stopColor="#f0127f" /><stop offset="1" stopColor="#fa7fc0" /></linearGradient>
        <linearGradient id="blue" {...v}><stop offset="0" stopColor="#a9c2ff" /><stop offset="1" stopColor="#4f6df0" /></linearGradient>
        <linearGradient id="tab" {...v}><stop offset="0" stopColor="#ffffff" /><stop offset=".5" stopColor="#fdfdfd" /><stop offset="1" stopColor="#cdcdcd" /></linearGradient>
        <linearGradient id="tag" {...v}><stop offset="0" stopColor="#fff3c8" /><stop offset=".35" stopColor="#fbd560" /><stop offset="1" stopColor="#f0a208" /></linearGradient>
        <linearGradient id="persp" {...v}><stop offset="0" stopColor="#9a9ea3" /><stop offset=".5" stopColor="#e4e5e7" /><stop offset="1" stopColor="#fff" /></linearGradient>
        <radialGradient id="dial"><stop offset="0" stopColor="#eeeeee" /><stop offset="1" stopColor="#b4b4b4" /></radialGradient>
        <radialGradient id="ball" cx=".4" cy=".3"><stop offset="0" stopColor="#ffd34d" /><stop offset="1" stopColor="#e0330c" /></radialGradient>
      </defs>
    </svg>
  );
}

export default function App() {
  return (
    <div className="h-[2867px] w-[4096px] overflow-hidden">
      <div className="relative h-[1098px] w-[1568px] overflow-hidden [zoom:2.61224]">
        <Gradients />
        <Rhino />
        <div className="absolute left-[416.600px] top-[80.700px] h-[965.100px] w-[1023.400px] shadow-[0_5px_16px_3px_rgba(0,0,0,0.38)]" />
        <Grasshopper />
      </div>
    </div>
  );
}
